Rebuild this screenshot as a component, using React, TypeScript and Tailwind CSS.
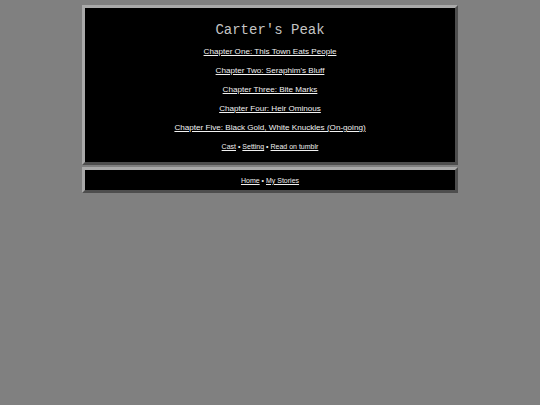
export default function App() {
  const chapters = [
    "Chapter One: This Town Eats People",
    "Chapter Two: Seraphim's Bluff",
    "Chapter Three: Bite Marks",
    "Chapter Four: Heir Ominous",
    "Chapter Five: Black Gold, White Knuckles (On-going)",
  ];
  const box =
    "bg-black border-[3px] border-t-[#a9a9a9] border-l-[#a9a9a9] border-b-[#4e4e4e] border-r-[#4e4e4e]";
  return (
    <div className="min-h-[405px] w-full bg-[#808080] pt-[5px]" style={{ fontFamily: '"Liberation Sans", Arial, sans-serif' }}>
      <div className="mx-auto flex w-[376px] flex-col gap-[2px]">
        <div className={box + " flex h-[160px] flex-col items-center pt-[12px]"}>
          <div className="h-[20px] text-[14px] leading-[20px] text-[#c4c4c4]" style={{ fontFamily: '"Liberation Mono", "Courier New", monospace' }}>
            Carter's Peak
          </div>
          <div className="mt-[2px] flex flex-col items-center">
            {chapters.map((c) => (
              <a key={c} href="#" className="h-[19px] text-[8.1px] leading-[19px] text-[#f2f2f2] underline">
                {c}
              </a>
            ))}
          </div>
          <div className="mt-[4px] h-[12px] text-[7px] leading-[12px] text-[#f0f0f0]">
            <a href="#" className="underline">Cast</a> • <a href="#" className="underline">Setting</a> •{" "}
            <a href="#" className="underline">Read on tumblr</a>
          </div>
        </div>
        <div className={box + " flex h-[26px] items-center justify-center pt-[1px]"}>
          <div className="text-[7px] leading-[12px] text-[#f0f0f0]">
            <a href="#" className="underline">Home</a> • <a href="#" className="underline">My Stories</a>
          </div>
        </div>
      </div>
    </div>
  );
}
